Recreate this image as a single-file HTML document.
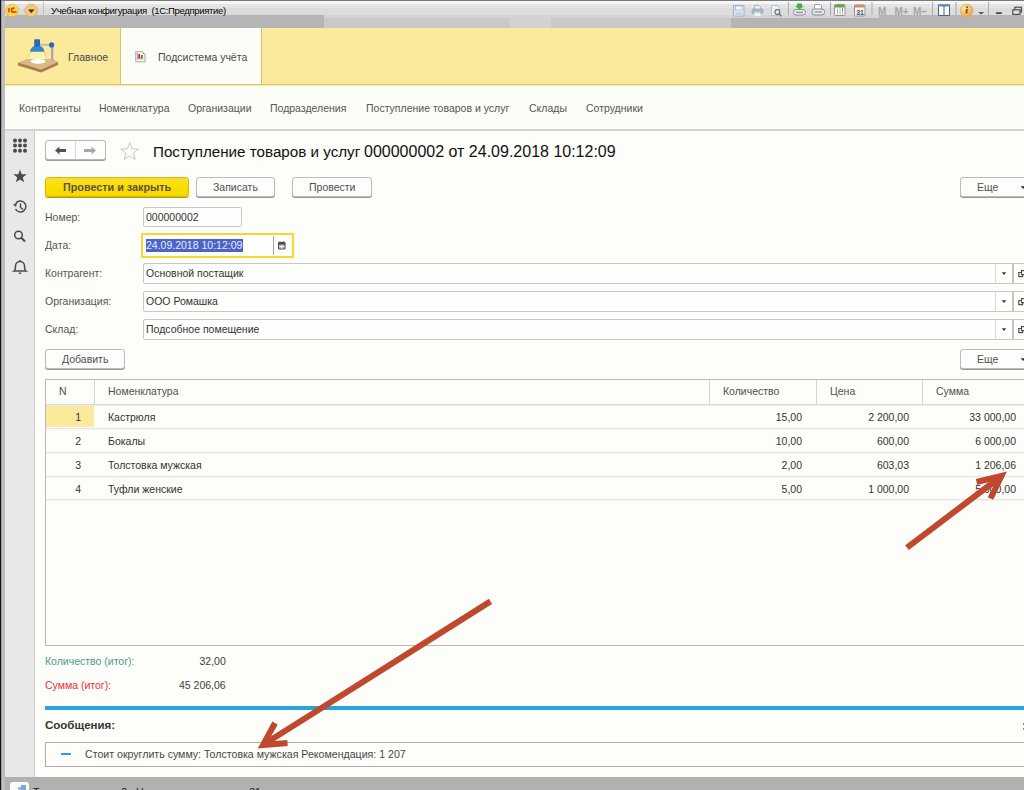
<!DOCTYPE html>
<html><head><meta charset="utf-8">
<style>
*{margin:0;padding:0;box-sizing:border-box}
html,body{width:1024px;height:790px;overflow:hidden;background:#fdfdf9;font-family:"Liberation Sans",sans-serif;color:#333}
.a{position:absolute}
.t{position:absolute;white-space:pre;line-height:12px;font-size:10.5px;color:#404040}
.r{text-align:right}
.btn{position:absolute;border:1px solid #bcbcbc;border-radius:3px;background:#fdfdfb;box-shadow:0 1px 0 #989898}
.fld{position:absolute;border:1px solid #c8c8c8;border-radius:2px;background:#fefefc}
</style></head><body>
<!-- window frame -->
<div class="a" style="left:0;top:0;width:1024px;height:1px;background:#7a7a7a"></div>
<!-- title bar -->
<div class="a" style="left:2px;top:1px;width:1022px;height:3px;background:#f6f6f6"></div>
<div class="a" style="left:2px;top:4px;width:1022px;height:4px;background:#e4e4e4"></div>
<div class="a" style="left:2px;top:8px;width:1022px;height:7px;background:#dcdcdc"></div>
<div class="a" style="left:2px;top:15px;width:1022px;height:3px;background:#d4d4d4"></div>
<div class="a" style="left:5px;top:18px;width:1019px;height:10px;background:#c8c9ca"></div>
<div class="a" style="left:510px;top:18px;width:41px;height:10px;background:#d2d2d2"></div>
<div class="a" style="left:5px;top:15px;width:319px;height:13px;background:#b4b5b4;border-top-left-radius:4px"></div>
<div class="a" style="left:731px;top:18px;width:148px;height:10px;background:#b4b5b4"></div><div class="a" style="left:879px;top:15px;width:145px;height:13px;background:#b4b5b4"></div>
<div class="a" style="left:43px;top:2px;width:1px;height:12px;background:#c0c0c4"></div>
<div class="t" style="left:51px;top:5px;font-size:9.5px;letter-spacing:-0.33px;line-height:11px;color:#000">Учебная конфигурация  (1С:Предприятие)</div>

<!-- left frame -->
<div class="a" style="left:0;top:0;width:1.2px;height:790px;background:#141414"></div>
<div class="a" style="left:1.2px;top:1px;width:3.8px;height:789px;background:linear-gradient(90deg,#8a8a8a,#c4c4c4 40%,#b8b8b8)"></div>

<!-- sections panel -->
<div class="a" style="left:5px;top:28px;width:1019px;height:57px;background:#fbe99c;border-bottom:1px solid #dcc862"></div>
<div class="a" style="left:120px;top:28px;width:142px;height:56px;background:#fdfdf8;border-left:1px solid #dcc65c;border-right:1px solid #dcc65c"></div>
<div class="t" style="left:68px;top:50.5px;color:#484848">Главное</div>
<div class="t" style="left:158px;top:50.5px;color:#484848">Подсистема учёта</div>

<!-- nav bar -->
<div class="a" style="left:5px;top:85px;width:1019px;height:46px;background:#fdfdf8;border-bottom:2px solid #d2d2d2"></div>
<div class="a" style="left:5px;top:85px;width:1019px;height:1px;background:#efe8bc"></div>
<div class="t" style="left:19px;top:101.5px;color:#555">Контрагенты</div>
<div class="t" style="left:99px;top:101.5px;color:#555">Номенклатура</div>
<div class="t" style="left:188px;top:101.5px;color:#555">Организации</div>
<div class="t" style="left:270px;top:101.5px;color:#555">Подразделения</div>
<div class="t" style="left:366px;top:101.5px;color:#555">Поступление товаров и услуг</div>
<div class="t" style="left:529px;top:101.5px;color:#555">Склады</div>
<div class="t" style="left:586px;top:101.5px;color:#555">Сотрудники</div>

<!-- sidebar -->
<div class="a" style="left:5px;top:131px;width:30px;height:646px;background:#e8e8e8;border-right:1px solid #cdcdcd"></div>

<!-- status bar -->
<div class="a" style="left:5px;top:777px;width:1019px;height:13px;background:#b0b1b0"></div>

<!-- document header -->
<div class="a" style="left:45px;top:140px;width:61px;height:20px;border:1px solid #b8b8b8;border-radius:3px;background:#fdfdfb;box-shadow:0 1px 0 #a0a0a0"></div>
<div class="a" style="left:75px;top:141px;width:1px;height:18px;background:#d8d8d8"></div>
<div class="t" style="left:153px;top:143px;font-size:15.2px;line-height:17px;color:#111">Поступление товаров и услуг</div><div class="t" style="left:364px;top:143px;font-size:16px;line-height:17px;color:#111">000000002 от 24.09.2018 10:12:09</div>

<!-- command bar -->
<div class="a" style="left:45px;top:177px;width:144px;height:20px;border:1px solid #d9b800;border-radius:3px;background:linear-gradient(#f9dc3c,#fbe000 40%,#f4d800);box-shadow:0 1px 0 #b89c10"></div>
<div class="t" style="left:63px;top:181px;font-weight:bold;font-size:10.8px;color:#5c4e4c">Провести и закрыть</div>
<div class="btn" style="left:196px;top:177px;width:79px;height:20px"></div>
<div class="t" style="left:213px;top:181px;color:#505050">Записать</div>
<div class="btn" style="left:292px;top:177px;width:80px;height:20px"></div>
<div class="t" style="left:309px;top:181px;color:#505050">Провести</div>
<div class="btn" style="left:960px;top:177px;width:70px;height:20px"></div>
<div class="t" style="left:977px;top:181px;color:#505050">Еще</div>

<!-- fields -->
<div class="t" style="left:45px;top:211px;color:#555">Номер:</div>
<div class="fld" style="left:143px;top:207px;width:99px;height:20px"></div>
<div class="t" style="left:146px;top:211px;color:#333">000000002</div>

<div class="t" style="left:45px;top:239px;color:#555">Дата:</div>
<div class="a" style="left:141px;top:233px;width:153px;height:25px;border:2px solid #f8d830;background:#fefefc"></div>
<div class="a" style="left:146px;top:239px;width:97px;height:13px;background:#4a64c8"></div>
<div class="t" style="left:146px;top:239px;color:#e8ecff">24.09.2018 10:12:09</div>
<div class="a" style="left:273px;top:236px;width:1px;height:19px;background:#a4a4a4"></div>

<div class="t" style="left:45px;top:267px;color:#555">Контрагент:</div>
<div class="fld" style="left:143px;top:263px;width:900px;height:21px"></div>
<div class="t" style="left:146px;top:267px;color:#333">Основной постащик</div>
<div class="t" style="left:45px;top:295px;color:#555">Организация:</div>
<div class="fld" style="left:143px;top:291px;width:900px;height:21px"></div>
<div class="t" style="left:146px;top:295px;color:#333">ООО Ромашка</div>
<div class="t" style="left:45px;top:323px;color:#555">Склад:</div>
<div class="fld" style="left:143px;top:319px;width:900px;height:21px"></div>
<div class="t" style="left:146px;top:323px;color:#333">Подсобное помещение</div>

<div class="btn" style="left:45px;top:349px;width:80px;height:20px"></div>
<div class="t" style="left:62px;top:353px;color:#505050">Добавить</div>
<div class="btn" style="left:960px;top:349px;width:70px;height:20px"></div>
<div class="t" style="left:977px;top:353px;color:#505050">Еще</div>

<!-- table -->
<div class="a" style="left:45px;top:379px;width:990px;height:267px;border:1px solid #b9b9b9;background:#fdfdf9"></div>
<div class="a" style="left:46px;top:404px;width:978px;height:1px;background:#d8d8d8"></div><div class="a" style="left:46px;top:405px;width:978px;height:1px;background:#ebebe8"></div>
<div class="t" style="left:59px;top:385px;color:#505050">N</div>
<div class="t" style="left:108px;top:385px;color:#505050">Номенклатура</div>
<div class="t" style="left:723px;top:385px;color:#505050">Количество</div>
<div class="t" style="left:830px;top:385px;color:#505050">Цена</div>
<div class="t" style="left:936px;top:385px;color:#505050">Сумма</div>

<!-- totals -->
<div class="t" style="left:45px;top:655px;color:#4a9c8c">Количество (итог):</div>
<div class="t" style="left:199.5px;top:655px">32,00</div>
<div class="t" style="left:45px;top:679px;color:#e8303a">Сумма (итог):</div>
<div class="t" style="left:179px;top:679px">45 206,06</div>

<div class="a" style="left:45px;top:706px;width:979px;height:4px;background:#2aa3dc"></div>
<div class="t" style="left:45px;top:718.5px;font-weight:bold;font-size:11.5px;color:#333">Сообщения:</div>
<div class="a" style="left:45px;top:742px;width:990px;height:25px;border:1px solid #acacac"></div>
<div class="a" style="left:61px;top:753px;width:10px;height:2px;background:#2aa3dc"></div>
<div class="t" style="left:85px;top:748px;font-size:10.6px;color:#484848">Стоит округлить сумму: Толстовка мужская Рекомендация: 1 207</div>

<!-- table rows -->
<div class="a" style="left:46px;top:406px;width:48px;height:21px;background:#fbe99c"></div>
<div class="a" style="left:94px;top:380px;width:1px;height:24px;background:#d4d4d4"></div>
<div class="a" style="left:709px;top:380px;width:1px;height:24px;background:#d4d4d4"></div>
<div class="a" style="left:816px;top:380px;width:1px;height:24px;background:#d4d4d4"></div>
<div class="a" style="left:922px;top:380px;width:1px;height:24px;background:#d4d4d4"></div>
<div class="a" style="left:46px;top:428px;width:978px;height:1px;background:#e6e6e3"></div><div class="a" style="left:46px;top:429px;width:978px;height:1px;background:#f3f3ef"></div>
<div class="a" style="left:46px;top:452px;width:978px;height:1px;background:#e6e6e3"></div><div class="a" style="left:46px;top:453px;width:978px;height:1px;background:#f3f3ef"></div>
<div class="a" style="left:46px;top:476px;width:978px;height:1px;background:#e6e6e3"></div><div class="a" style="left:46px;top:477px;width:978px;height:1px;background:#f3f3ef"></div>
<div class="a" style="left:46px;top:499px;width:978px;height:1px;background:#e6e6e3"></div><div class="a" style="left:46px;top:500px;width:978px;height:1px;background:#f3f3ef"></div>
<div class="t r" style="left:41px;width:40px;top:411px;color:#333">1</div>
<div class="t" style="left:108px;top:411px;color:#333">Кастрюля</div>
<div class="t r" style="left:702px;width:100px;top:411px;color:#333">15,00</div>
<div class="t r" style="left:809px;width:100px;top:411px;color:#333">2 200,00</div>
<div class="t r" style="left:916px;width:100px;top:411px;color:#333">33 000,00</div>
<div class="t r" style="left:41px;width:40px;top:435px;color:#333">2</div>
<div class="t" style="left:108px;top:435px;color:#333">Бокалы</div>
<div class="t r" style="left:702px;width:100px;top:435px;color:#333">10,00</div>
<div class="t r" style="left:809px;width:100px;top:435px;color:#333">600,00</div>
<div class="t r" style="left:916px;width:100px;top:435px;color:#333">6 000,00</div>
<div class="t r" style="left:41px;width:40px;top:459px;color:#333">3</div>
<div class="t" style="left:108px;top:459px;color:#333">Толстовка мужская</div>
<div class="t r" style="left:702px;width:100px;top:459px;color:#333">2,00</div>
<div class="t r" style="left:809px;width:100px;top:459px;color:#333">603,03</div>
<div class="t r" style="left:916px;width:100px;top:459px;color:#333">1 206,06</div>
<div class="t r" style="left:41px;width:40px;top:483px;color:#333">4</div>
<div class="t" style="left:108px;top:483px;color:#333">Туфли женские</div>
<div class="t r" style="left:702px;width:100px;top:483px;color:#333">5,00</div>
<div class="t r" style="left:809px;width:100px;top:483px;color:#333">1 000,00</div>
<div class="t r" style="left:916px;width:100px;top:483px;color:#333">5 000,00</div>

<!-- field dropdown parts -->
<div class="a" style="left:995px;top:264px;width:1px;height:19px;background:#d8d8d8"></div>
<div class="a" style="left:1012px;top:264px;width:2px;height:19px;background:#c4c4c4"></div>
<div class="a" style="left:995px;top:292px;width:1px;height:19px;background:#d8d8d8"></div>
<div class="a" style="left:1012px;top:292px;width:2px;height:19px;background:#c4c4c4"></div>
<div class="a" style="left:995px;top:320px;width:1px;height:19px;background:#d8d8d8"></div>
<div class="a" style="left:1012px;top:320px;width:2px;height:19px;background:#c4c4c4"></div>

<svg class="a" style="left:0;top:0" width="1024" height="790" viewBox="0 0 1024 790">
 <!-- dropdown arrows -->
 <path d="M1001.8 272.3h4.4l-2.2 2.7z M1001.8 300.3h4.4l-2.2 2.7z M1001.8 328.3h4.4l-2.2 2.7z" fill="#333"/>
 <path d="M1021 272.5 H1018.8 V276.6 H1022.6 V274.6" stroke="#505050" stroke-width="1.2" fill="none"/><rect x="1021.5" y="270.6" width="5" height="4" stroke="#505050" stroke-width="1.2" fill="none"/><path d="M1021 300.5 H1018.8 V304.6 H1022.6 V302.6" stroke="#505050" stroke-width="1.2" fill="none"/><rect x="1021.5" y="298.6" width="5" height="4" stroke="#505050" stroke-width="1.2" fill="none"/><path d="M1021 328.5 H1018.8 V332.6 H1022.6 V330.6" stroke="#505050" stroke-width="1.2" fill="none"/><rect x="1021.5" y="326.6" width="5" height="4" stroke="#505050" stroke-width="1.2" fill="none"/>
 
 <!-- Еще arrows -->
 <path d="M1020.6 186.3h5l-2.5 2.7z M1020.6 358.2h5l-2.5 2.7z" fill="#333"/>
 <!-- calendar icon -->
 <rect x="278" y="242" width="7.5" height="7.5" rx="1" fill="#4a4a4a"/>
 <rect x="279" y="244.6" width="5.5" height="4" fill="#b4b4b4"/>
 <path d="M279 246.6h5.5 M281.75 244.6v4" stroke="#f4f4f4" stroke-width="0.9"/>
 <rect x="279.3" y="241" width="1.2" height="1.5" fill="#808080"/><rect x="283" y="241" width="1.2" height="1.5" fill="#808080"/>
 <!-- nav arrows -->
 <path d="M55 150.5 L59.5 146.5 V149 H66 V152 H59.5 V154.5Z" fill="#505058"/>
 <path d="M96 150.5 L91.5 146.5 V149 H84 V152 H91.5 V154.5Z" fill="#a8a8ac"/>
 <!-- star outline -->
 <path d="M129.70,142.70 L131.99,148.84 L138.54,149.13 L133.41,153.21 L135.17,159.52 L129.70,155.90 L124.23,159.52 L125.99,153.21 L120.86,149.13 L127.41,148.84Z" fill="none" stroke="#c8c8c8" stroke-width="1"/>
 <!-- sidebar icons -->
 <g fill="#4a4a4a">
  <circle cx="15" cy="140.6" r="2"/><circle cx="20" cy="140.6" r="2"/><circle cx="25" cy="140.6" r="2"/><circle cx="15" cy="145.6" r="2"/><circle cx="20" cy="145.6" r="2"/><circle cx="25" cy="145.6" r="2"/><circle cx="15" cy="150.7" r="2"/><circle cx="20" cy="150.7" r="2"/><circle cx="25" cy="150.7" r="2"/>
  <path d="M20.00,169.50 L21.70,174.15 L26.66,174.34 L22.76,177.40 L24.11,182.16 L20.00,179.40 L15.89,182.16 L17.24,177.40 L13.34,174.34 L18.30,174.15Z"/>
 </g>
 <g fill="none" stroke="#4a4a4a" stroke-width="1.5">
  <path d="M15.5 209 A5.5 5.5 0 1 0 15.8 203.5"/>
  <path d="M20.5 203.5 V207.5 L23 209.5"/>
  <circle cx="18.5" cy="235" r="3.8"/>
  <path d="M21.3 237.8 L25 241.5" stroke-width="2"/>
  <path d="M14 271 C15.5 270 15.5 268 15.5 266 A4.5 4.5 0 0 1 24.5 266 C24.5 268 24.5 270 26 271 Z"/>
 </g>
 <path d="M13 204.5 L17 203 L16 207z" fill="#4a4a4a"/>
 <circle cx="20" cy="261" r="1" fill="#4a4a4a"/>
 <path d="M18.5 272.5 h3 a1.5 1.5 0 0 1 -3 0z" fill="#4a4a4a"/>
 <!-- title bar icons -->
 <circle cx="12.1" cy="10.5" r="6.3" fill="#f7de3a" stroke="#e0b060" stroke-width="0.8"/>
 <path d="M7.6 9 L9.6 7.6 V12.6 H8.3 V9.6z" fill="#e8202a"/><path d="M14.6 8.4 A2.1 2.1 0 1 0 12.4 12 H16.6" stroke="#e8202a" stroke-width="1.5" fill="none"/>
 <circle cx="31.2" cy="10.6" r="6.3" fill="#f4c878" stroke="#d8a850" stroke-width="0.8"/>
 <path d="M28 9.5 h6.5 l-3.25 3.5z" fill="#3a2a20"/>
 <rect x="733.5" y="5.5" width="10.5" height="10.5" fill="#dfe6ee" stroke="#98b4d0"/>
 <rect x="735.5" y="6" width="6.5" height="4" fill="#f4f6f8" stroke="#98a8c0" stroke-width="0.6"/>
 <rect x="735.5" y="12" width="6.5" height="4" fill="#c8d4e0"/>
 <path d="M754.5 9 V5.5 H759 L760.5 7 V9" fill="#eef0f2" stroke="#98a8c0" stroke-width="0.8"/>
 <rect x="752" y="9" width="11" height="4.5" rx="1" fill="#a8bcc8" stroke="#8898a8" stroke-width="0.6"/>
 <rect x="754.5" y="12.5" width="6" height="3.5" fill="#f0f0f0"/>
 <path d="M771.5 5.5 H777 L779.5 8 V15.5 H771.5Z" fill="#eef2f6" stroke="#a8b8cc" stroke-width="0.8"/>
 <circle cx="777.3" cy="12" r="2.4" fill="none" stroke="#707070" stroke-width="1.2"/>
 <path d="M779 13.8 L781.5 16.2" stroke="#707070" stroke-width="1.3"/>
 <rect x="788" y="2" width="1" height="13" fill="#a8a8b0"/>
 <path d="M797 3.5h5v2.5h2l-4.5 3.5l-4.5-3.5h2z" fill="#40b040"/>
 <rect x="793.5" y="9.5" width="12" height="5.5" rx="2.5" fill="#e8eaec" stroke="#8a9098"/>
 <path d="M796 12.3 h7" stroke="#707880"/>
 <path d="M814.5 9 V4.5 H820 L821.5 6 V9" fill="#ffffff" stroke="#808890" stroke-width="0.8"/>
 <rect x="812" y="9" width="12.5" height="6" rx="2.5" fill="#e8eaec" stroke="#808890"/>
 <path d="M814.5 12 h7.5" stroke="#707880"/>
 <rect x="830" y="2" width="1" height="13" fill="#a8a8b0"/>
 <rect x="834.5" y="4.5" width="10.5" height="11" rx="1" fill="#fafafa" stroke="#909090"/>
 <rect x="835" y="5" width="9.5" height="2.5" fill="#50b040"/>
 <path d="M837.5 8.5 v6 M840 8.5 v6 M842.5 8.5 v6" stroke="#909090" stroke-width="0.7"/>
 <rect x="842" y="8.5" width="1" height="2" fill="#e04050"/>
 <rect x="854.5" y="5" width="10.5" height="11" rx="1" fill="#fafafa" stroke="#909090"/>
 <rect x="855" y="5" width="9.5" height="2.5" fill="#d88a50"/>
 <text x="856.2" y="14.6" font-family="Liberation Sans" font-size="7" font-weight="bold" fill="#404858">31</text>
 <rect x="871.5" y="2" width="1" height="13" fill="#a8a8b0"/>
 <text x="878" y="14.5" font-family="Liberation Sans" font-size="10" font-weight="bold" fill="#a4a4a4">M</text>
 <text x="894.5" y="14.5" font-family="Liberation Sans" font-size="10" font-weight="bold" fill="#a4a4a4">M+</text>
 <text x="913" y="14.5" font-family="Liberation Sans" font-size="10" font-weight="bold" fill="#a4a4a4">M−</text>
 <rect x="932" y="2" width="1" height="13" fill="#a8a8b0"/>
 <rect x="938.5" y="5" width="11" height="10.5" fill="#fdfdfd" stroke="#586070" stroke-width="1"/>
 <rect x="938" y="4.5" width="12" height="2" fill="#4a90d8"/>
 <rect x="943.5" y="5" width="1" height="10.5" fill="#586070"/>
 <rect x="955.5" y="2" width="1" height="13" fill="#a8a8b0"/>
 <defs><radialGradient id="ig" cx="0.35" cy="0.3" r="0.75"><stop offset="0" stop-color="#fbe890"/><stop offset="0.6" stop-color="#f4c060"/><stop offset="1" stop-color="#eca050"/></radialGradient></defs>
 <circle cx="966.6" cy="10.6" r="6.4" fill="url(#ig)" stroke="#e0a858" stroke-width="0.6"/>
 <path d="M966 9 h1.8 l-0.6 4.5 h-1.8z" fill="#505068"/>
 <circle cx="967" cy="7.2" r="1" fill="#505068"/>
 <path d="M978.3 12.2 h5.8 l-2.9 2z" fill="#303040"/>
 <rect x="988" y="2" width="1" height="13" fill="#a8a8b0"/>
 <rect x="996" y="12.3" width="5.8" height="1.6" fill="#383838"/>
 <rect x="1014.8" y="7.2" width="6.6" height="4.8" fill="none" stroke="#383838" stroke-width="1"/>
 <rect x="1012.8" y="9.8" width="7.2" height="4.6" fill="#dcdcdc" stroke="#383838" stroke-width="1"/>
 <!-- lamp icon -->
 <path d="M18 62.5 L27 59 L53 59 L58 62 L41 69.5 Z" fill="#dcb888"/>
 <path d="M18 62.5 L41 69.5 L58 62 L58 65 L41 72.5 L18 65.5Z" fill="#a87c4c"/>
 <ellipse cx="38" cy="61.3" rx="7.5" ry="2.4" fill="#ffffff"/>
 <path d="M31 52 L27 59 L48 59 L44 52Z" fill="#fff8c8" opacity=".6"/>
 <path d="M31 52 L28 58 M44 52 L46.5 58" stroke="#f0d020" stroke-width="1" opacity=".8"/>
 <path d="M30 51.8 C30.5 48 33 46.2 34.2 46 H40 C41.5 46.2 44 48 44.6 51.8 Z" fill="#3a88cc"/>
 <rect x="34.2" y="39.3" width="5.8" height="7.5" rx="1" fill="#2a6cb4"/>
 <path d="M40 44.8 H50" stroke="#b8b8c4" stroke-width="2"/>
 <rect x="51" y="45" width="2.3" height="15" fill="#a8a8b4"/>
 <circle cx="51.6" cy="44.9" r="2.6" fill="#2a6cb4"/>
 <!-- subsystem icon -->
 <path d="M135.8 51.8 H142 L145 54.8 V61.8 H135.8Z" fill="#fdfdfd" stroke="#a8a8a8" stroke-width="1.1"/>
 <rect x="137" y="53" width="0.9" height="5.8" fill="#80a0d0"/>
 <rect x="138.2" y="54" width="2.1" height="4.8" rx="0.8" fill="#f02838"/>
 <rect x="141" y="55" width="1.9" height="3.8" fill="#38a838"/>
 <rect x="136.8" y="58.6" width="6.4" height="0.6" fill="#a07050"/>
 <!-- arrows -->
 <g stroke="#c0482e" stroke-width="6" fill="none" stroke-linejoin="miter" stroke-miterlimit="10">
  <path d="M907 547.6 L999 478"/>
  <path d="M976.5 482 L1001.5 476 L990.5 498.5"/>
  <path d="M490.5 601.4 L266 743"/>
  <path d="M275 723 L263 745 L287.5 743"/>
 </g>
</svg>
<div class="a" style="left:1023px;top:723px;width:2px;height:2px;background:#888"></div><div class="a" style="left:1023px;top:728px;width:2px;height:2px;background:#888"></div>
<!-- status text -->
<div class="a" style="left:10px;top:782px;width:19px;height:10px;background:#fafafa;border-radius:3px"></div>
<div class="a" style="left:18px;top:787px;width:3px;height:3px;background:#a0b8d0"></div><div class="a" style="left:21px;top:785px;width:5px;height:5px;background:#78a8d8"></div>
<div class="t" style="left:33px;top:785.5px;font-size:10.6px;color:#202020">Текущие вызовы: 0 . Накопленные вызовы: 31</div>

</body></html>
